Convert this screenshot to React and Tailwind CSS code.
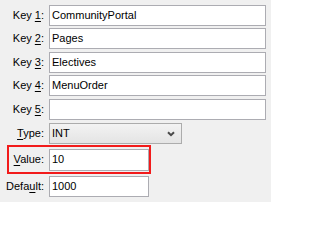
import React from "react";

const font = { fontFamily: '"Liberation Sans", Arial, sans-serif' };

function Label({ pre, acc, post, className = "" }) {
  return (
    <div className={`shrink-0 text-right text-[11px] text-black ${className}`}>
      {pre}
      <span className="underline underline-offset-2">{acc}</span>
      {post}
    </div>
  );
}

function Field({ value, className = "" }) {
  return (
    <div
      className={`flex items-center border border-[#acacb2] bg-white pl-[2px] text-[11px] text-black ${className}`}
    >
      {value}
    </div>
  );
}

const keys = [
  { value: "CommunityPortal", gap: "" },
  { value: "Pages", gap: "mt-[2px]" },
  { value: "Electives", gap: "mt-[3px]" },
  { value: "MenuOrder", gap: "mt-[2px]" },
  { value: "", gap: "mt-[3px]" },
];

export default function App() {
  return (
    <div className="h-[202px] w-[271px] bg-[#f0f0f0] pt-[5px]" style={font}>
      {keys.map((k, i) => (
        <div key={i} className={`flex items-center ${k.gap}`}>
          <Label pre="Key " acc={String(i + 1)} post=":" className="w-[44px]" />
          <Field value={k.value} className="ml-[5px] h-[21px] w-[217px]" />
        </div>
      ))}

      {/* Type select */}
      <div className="mt-[3px] flex items-center">
        <Label pre="" acc="T" post="ype:" className="w-[44px]" />
        <div className="ml-[5px] flex h-[21px] w-[133px] items-center justify-between border border-[#acacac] bg-gradient-to-b from-[#f3f3f3] to-[#e4e4e4] pl-[2px] pr-[6px] text-[11px] text-black">
          INT
          <svg width="8" height="6" viewBox="0 0 8 6">
            <path d="M1 1.2 L4 4.2 L7 1.2" fill="none" stroke="#4a4a4a" strokeWidth="2" />
          </svg>
        </div>
      </div>

      {/* Value, highlighted */}
      <div className="ml-[7px] mt-[1px] flex h-[29px] w-[144px] items-center border-2 border-[#f21b1b]">
        <Label pre="" acc="V" post="alue:" className="w-[35px]" />
        <Field value="10" className="ml-[5px] h-[22px] w-[100px]" />
      </div>

      <div className="mt-[2px] flex items-center">
        <Label pre="Defa" acc="u" post="lt:" className="w-[44px]" />
        <Field value="1000" className="ml-[5px] h-[21px] w-[100px]" />
      </div>
    </div>
  );
}
